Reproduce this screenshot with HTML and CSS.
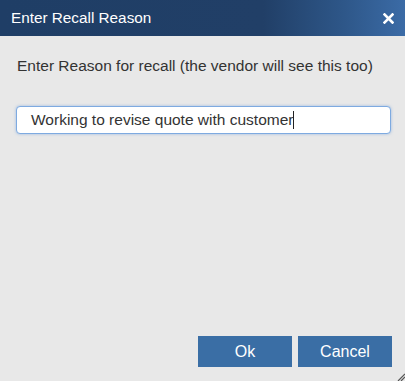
FILE: index.html
```html
<!DOCTYPE html>
<html lang="en">
<head>
    <meta charset="UTF-8">
    <meta name="viewport" content="width=device-width, initial-scale=1.0">
    <title>Enter Recall Reason</title>
    <link rel="stylesheet" href="styles.css">
</head>
<body>
    <div class="dialog">
        <!-- Title bar -->
        <div class="titlebar">
            <span class="title">Enter Recall Reason</span>
            <svg class="close" width="11" height="11" viewBox="0 0 11 11">
                <path d="M1.5 1.5 L9.5 9.5 M9.5 1.5 L1.5 9.5" stroke="white" stroke-width="2.6" stroke-linecap="square" fill="none"/>
            </svg>
        </div>

        <!-- Content -->
        <div class="content">
            <p class="prompt">Enter Reason for recall (the vendor will see this too)</p>
            <div class="reason-input">Working to revise quote with customer<span class="caret"></span></div>
        </div>

        <!-- Buttons -->
        <div class="buttons">
            <button type="button" class="btn">Ok</button>
            <button type="button" class="btn">Cancel</button>
        </div>

        <svg class="grip" width="8" height="8" viewBox="0 0 8 8">
            <path d="M1 8 L8 1 M4 8 L8 4" stroke="#555" stroke-width="1.2" fill="none"/>
        </svg>
    </div>
</body>
</html>
```

FILE: styles.css
```css
body {
    font-family: "Liberation Sans", Arial, sans-serif;
    margin: 0;
    background-color: #e8e8e8;
}
.dialog {
    width: 405px;
    height: 381px;
    display: flex;
    flex-direction: column;
    position: relative;
    background-color: #e8e8e8;
}
.titlebar {
    height: 36px;
    display: flex;
    align-items: center;
    justify-content: space-between;
    padding: 0 11px 0 11px;
    box-sizing: border-box;
    background: linear-gradient(to right, #1f3e66 0%, #213f67 65%, #2e5789 85%, #3b6ba6 100%);
    color: white;
}
.title {
    font-size: 15.3px;
}
.close {
    margin-top: 1px;
}
.content {
    flex: 1;
    padding: 0 14px 0 16px;
}
.prompt {
    margin: 21px 0 0 1px;
    font-size: 15.5px;
    color: #333;
}
.reason-input {
    margin-top: 31px;
    height: 28px;
    box-sizing: border-box;
    border: 1px solid #7eaae0;
    border-radius: 4px;
    background-color: white;
    box-shadow: 0 0 3px rgba(102, 153, 221, 0.6);
    padding: 4px 0 0 14px;
    font-size: 15.5px;
    color: #333;
}
.caret {
    display: inline-block;
    width: 1px;
    height: 18px;
    background-color: #222;
    vertical-align: -4px;
}
.buttons {
    display: flex;
    justify-content: flex-end;
    gap: 6px;
    padding: 0 13px 14px 0;
}
.btn {
    width: 94px;
    height: 31px;
    border: none;
    background-color: #3a6ea5;
    color: white;
    font-family: "Liberation Sans", Arial, sans-serif;
    font-size: 16px;
    cursor: pointer;
}
.grip {
    position: absolute;
    right: 0;
    bottom: 0;
}
```
